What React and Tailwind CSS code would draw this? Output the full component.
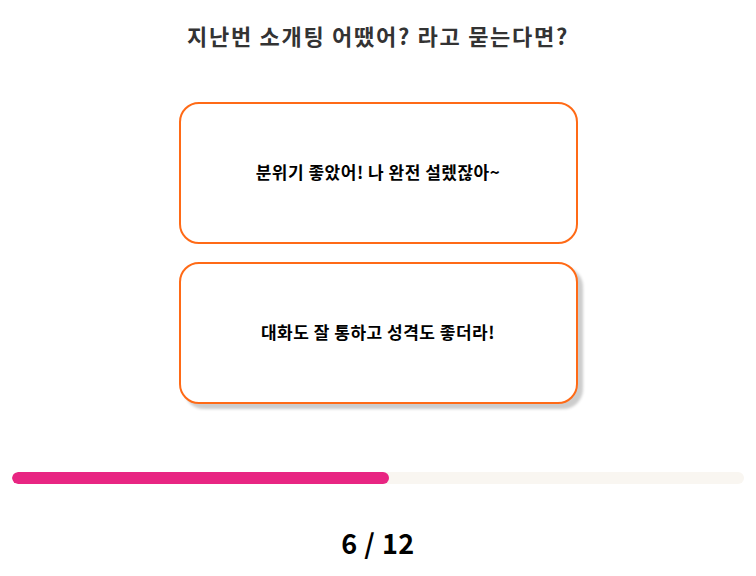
import React from 'react';

const answers = [
    { id: 1, text: '분위기 좋았어! 나 완전 설렜잖아~', hovered: false },
    { id: 2, text: '대화도 잘 통하고 성격도 좋더라!', hovered: true },
];

function App() {
    const current = 6;
    const total = 12;

    return (
        <div
            className="w-[756px] h-[576px] bg-white flex flex-col items-center overflow-hidden"
            style={{ fontFamily: '"Noto Sans CJK KR", "Noto Sans", sans-serif' }}
        >
            <h1 className="mt-[20px] text-[22px] leading-[30px] font-bold tracking-[1.7px] text-[#333333]">
                지난번 소개팅 어땠어? 라고 묻는다면?
            </h1>

            <div className="mt-[52px] flex flex-col gap-[18px]">
                {answers.map((a) => (
                    <button
                        key={a.id}
                        className={`w-[399px] h-[142px] flex items-center justify-center rounded-[20px] border-2 border-[#ff6a16] bg-white text-[17px] leading-[22px] font-bold tracking-[0.5px] text-black ${
                            a.hovered ? 'shadow-[5px_5px_3px_rgba(0,0,0,0.2)]' : ''
                        }`}
                    >
                        <span className="-mt-[3px]">{a.text}</span>
                    </button>
                ))}
            </div>

            <div className="mt-[68px] w-[732px] h-[12px] rounded-full bg-[#f9f6f1] overflow-hidden">
                <div className="h-full rounded-full bg-[#e82582]" style={{ width: '51.5%' }}></div>
            </div>

            <div className="mt-[43px] text-[27px] leading-[32px] font-bold tracking-[0.5px] text-black">
                {current} / {total}
            </div>
        </div>
    );
}

export default App;
